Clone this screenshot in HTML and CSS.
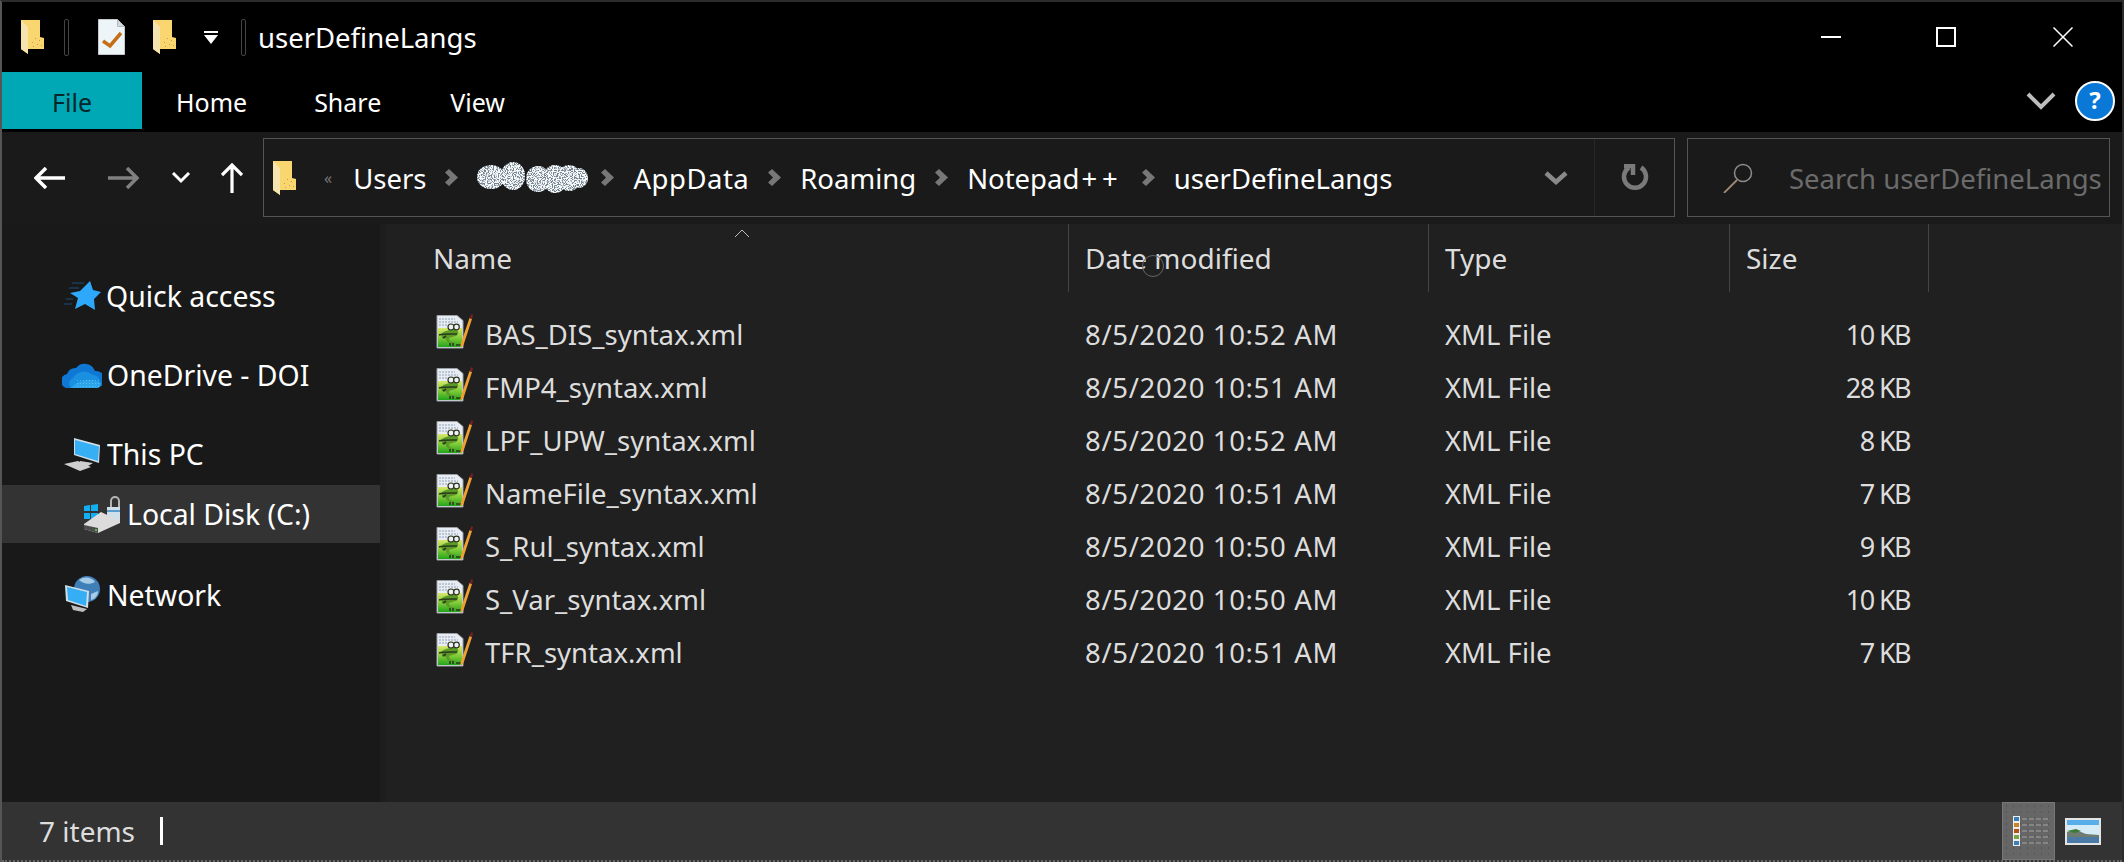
FILE: index.html
```html
<!DOCTYPE html>
<html lang="en">
<head>
    <meta charset="UTF-8">
    <title>userDefineLangs</title>
    <link rel="stylesheet" href="styles.css">
</head>
<body>
<svg class="defs" width="0" height="0">
    <defs>
        <linearGradient id="greenfill" x1="0" y1="0" x2="0" y2="1">
            <stop offset="0" stop-color="#d8e86c"/>
            <stop offset=".5" stop-color="#86cc3a"/>
            <stop offset="1" stop-color="#22a51c"/>
        </linearGradient>
        <filter id="scribble" x="0" y="0" width="100%" height="100%">
            <feTurbulence type="fractalNoise" baseFrequency="0.85" numOctaves="2" seed="7"/>
            <feColorMatrix values="0 0 0 0 0.92  0 0 0 0 0.96  0 0 0 0 0.99  6 6 0 0 -5.2"/>
            <feComposite in2="SourceAlpha" operator="in"/>
        </filter>
        <pattern id="dots" width="3" height="3" patternUnits="userSpaceOnUse">
            <rect width="1" height="1" fill="#9ad2f7"/>
        </pattern>
        <symbol id="chev" viewBox="0 0 13 17">
            <path d="M4 0l9 8.500-9 8.500-4-3.500 5-5-5-5z" fill="#777"/>
        </symbol>
        <symbol id="folder" viewBox="0 0 23 34">
            <path d="M0 0h19v17l4 1v11H7v5L0 29z" fill="#fad671"/>
            <path d="M0 0l7 7v27L0 29z" fill="#f6e4ae"/>
            <path d="M11 22h1v1h-1zM14 18h1v1h-1zM16 24h1v1h-1zM18 20h1v1h-1zM12 26h1v1h-1zM20 25h1v1h-1z" fill="#d9953a"/>
        </symbol>
        <symbol id="npp" viewBox="0 0 37 36">
            <path d="M1 1.500h20l6 5V34H1z" fill="#e8edf3" stroke="#9aa0a6"/>
            <path d="M3 5h16M3 8h19M3 11h9" stroke="#8fa0b5" stroke-width="1.200" stroke-dasharray="2 1"/>
            <path d="M2 14h24v19H2z" fill="url(#greenfill)"/>
            <path d="M5 20c3-3 7-4 10-4h5c3 1 3 4 0 6-3 1-5 1-7 2 0 3 2 4 4 4l4 2-6-1c-3 0-5-2-5-4l-4-1z" fill="#5c9a28"/>
            <circle cx="15" cy="13" r="3" fill="#eef1f2" stroke="#2c3320" stroke-width="1.200"/>
            <circle cx="20.500" cy="13" r="2.800" fill="#eef1f2" stroke="#2c3320" stroke-width="1.200"/>
            <path d="M3 21c4-1 9-1 13-1h5M7 24l3-2M14 29v3M17 29v3M20 31h5" fill="none" stroke="#2b3a1c" stroke-width="1.600"/>
            <path d="M25 29l-1 5 3.500-3L36 5l-2.500-1z" fill="#f0a030"/>
            <path d="M33.500 4l2.500 1 1-4-1.500-1z" fill="#7a2020"/>
        </symbol>
    </defs>
</svg>

<div class="window">
    <div class="titlebar">
        <svg class="qa-folder" width="23" height="34"><use href="#folder"/></svg>
        <span class="qa-sep"></span>
        <svg class="qa-doc" width="27" height="36" viewBox="0 0 27 36">
            <path d="M.5.500h19l7 7v28H.500z" fill="#eef5f8" stroke="#c4c8cc"/>
            <path d="M19.500.500v7h7z" fill="#d3d9dd" stroke="#b5b9bd"/>
            <path d="M5 22l7 5 11-13" fill="none" stroke="#c46f17" stroke-width="3.500"/>
        </svg>
        <svg class="qa-folder2" width="23" height="34"><use href="#folder"/></svg>
        <svg class="qa-drop" width="14" height="13" viewBox="0 0 14 13">
            <path d="M0 0h14v2H0zM0 4h14l-7 9z" fill="#fff"/>
        </svg>
        <span class="qa-sep second"></span>
        <span class="title">userDefineLangs</span>
        <div class="winbtns">
            <span class="min"></span>
            <span class="max"></span>
            <svg width="20" height="20" viewBox="0 0 20 20"><path d="M.5.500l19 19M19.500.500l-19 19" stroke="#fff" stroke-width="1.500"/></svg>
        </div>
    </div>

    <div class="ribbon">
        <div class="tab file">File</div>
        <div class="tab home">Home</div>
        <div class="tab share">Share</div>
        <div class="tab view">View</div>
        <svg class="collapse" width="30" height="18" viewBox="0 0 30 18">
            <path d="M2 2l13 13L28 2" fill="none" stroke="#bdbdbd" stroke-width="4"/>
        </svg>
        <div class="help">?</div>
    </div>

    <div class="toolbar">
        <div class="nav">
            <svg class="back" width="31" height="22" viewBox="0 0 31 22"><path d="M31 11H3M12 1L2 11l10 10" fill="none" stroke="#fff" stroke-width="3.500"/></svg>
            <svg class="forward" width="31" height="22" viewBox="0 0 31 22"><path d="M0 11h28M19 1l10 10-10 10" fill="none" stroke="#808080" stroke-width="3.500"/></svg>
            <svg class="recent" width="20" height="12" viewBox="0 0 20 12"><path d="M2 1l8 8 8-8" fill="none" stroke="#fff" stroke-width="3"/></svg>
            <svg class="up" width="22" height="30" viewBox="0 0 22 30"><path d="M11 30V3M1 12L11 2l10 10" fill="none" stroke="#fff" stroke-width="3.200"/></svg>
        </div>
        <div class="address">
            <svg class="addr-folder" width="23" height="34"><use href="#folder"/></svg>
            <span class="more">«</span>
            <span class="crumb users">Users</span>
            <svg class="chev" width="13" height="17"><use href="#chev"/></svg>
            <svg class="blot" width="112" height="31" viewBox="0 0 112 31">
                <g fill="#76828c">
                    <ellipse cx="14" cy="15" rx="14" ry="12"/>
                    <ellipse cx="36" cy="14" rx="12" ry="14"/>
                    <ellipse cx="61" cy="17" rx="12" ry="13"/>
                    <ellipse cx="78" cy="17" rx="12" ry="14"/>
                    <ellipse cx="92" cy="16" rx="12" ry="13"/>
                    <ellipse cx="102" cy="16" rx="9" ry="10"/>
                </g>
                <g filter="url(#scribble)">
                    <ellipse cx="14" cy="15" rx="14" ry="12"/>
                    <ellipse cx="36" cy="14" rx="12" ry="14"/>
                    <ellipse cx="61" cy="17" rx="12" ry="13"/>
                    <ellipse cx="78" cy="17" rx="12" ry="14"/>
                    <ellipse cx="92" cy="16" rx="12" ry="13"/>
                    <ellipse cx="102" cy="16" rx="9" ry="10"/>
                </g>
            </svg>
            <svg class="chev" width="13" height="17"><use href="#chev"/></svg>
            <span class="crumb appdata">AppData</span>
            <svg class="chev" width="13" height="17"><use href="#chev"/></svg>
            <span class="crumb">Roaming</span>
            <svg class="chev" width="13" height="17"><use href="#chev"/></svg>
            <span class="crumb notepad">Notepad<span class="plus">++</span></span>
            <svg class="chev" width="13" height="17"><use href="#chev"/></svg>
            <span class="crumb">userDefineLangs</span>
            <svg class="addr-drop" width="24" height="14" viewBox="0 0 24 14"><path d="M2 2l10 9 10-9" fill="none" stroke="#8a8a8a" stroke-width="4.500"/></svg>
            <div class="refresh">
                <svg width="28" height="28" viewBox="0 0 28 28"><path d="M8 3.500a11 11 0 1 0 12 0M3 2h9v9" fill="none" stroke="#7a7a7a" stroke-width="4.500"/></svg>
            </div>
        </div>
        <div class="search">
            <svg width="30" height="30" viewBox="0 0 30 30"><circle cx="20" cy="10" r="8.500" fill="none" stroke="#8c8c8c" stroke-width="1.500"/><path d="M14 17L1 30" stroke="#a08a70" stroke-width="1.800"/></svg>
            <span>Search userDefineLangs</span>
        </div>
    </div>

    <div class="content">
        <aside class="sidebar">
            <div class="navitem quick">
                <svg width="38" height="32" viewBox="0 0 38 32">
                    <path d="M8 3h12M5 8h10M2 19h7M0 24h8" stroke="#1a4f7d" stroke-width="1"/>
                    <path d="M26 1l3 9 8 2-7 7 1 11-10-6-10 5 3-11-8-5 10-2z" fill="#2ea8fa"/>
                </svg>
                <span>Quick access</span>
            </div>
            <div class="navitem drive">
                <svg width="40" height="26" viewBox="0 0 40 26">
                    <path d="M7 26a7 7 0 0 1-2-14 9 9 0 0 1 9-6 11 11 0 0 1 19 3 8 8 0 0 1 2 17z" fill="#0f78d4"/>
                    <path d="M9 26a6 6 0 0 1 2-10 13 13 0 0 1 20-3 7 7 0 0 1 7 8 5 5 0 0 1-3 5z" fill="#1a90e0"/>
                    <path d="M9 26c3-4 10-8 18-8 5 0 9 1 12 3a5 5 0 0 1-4 5z" fill="#2ba6ec"/>
                    <path d="M14 16h24v10H14z" fill="url(#dots)" opacity=".5"/>
                </svg>
                <span>OneDrive - DOI</span>
            </div>
            <div class="navitem pc">
                <svg width="38" height="35" viewBox="0 0 38 35">
                    <path d="M11 1l26 7-1 18-25-8z" fill="#cfdde6"/>
                    <path d="M12 3l24 6.500-1 14.500-23-7z" fill="#36aff5"/>
                    <path d="M17 24l13 2-5 3-8-2zM1 27l14-3 13 6-11 4z" fill="#cfcfcf"/>
                </svg>
                <span>This PC</span>
            </div>
            <div class="navitem selected">
                <svg width="38" height="38" viewBox="0 0 38 38">
                    <path d="M1 11l6-1v6H1zM8 10l7-1v7H8zM1 18h6v6H1zM8 18h7v7H8z" fill="#12b0f2"/>
                    <path d="M28 13V6a4 4 0 0 1 8 0v7" fill="none" stroke="#b5b5b5" stroke-width="2"/>
                    <path d="M24 12h13v15H24z" fill="#cfdfe9"/>
                    <path d="M24 15h13v2H24z" fill="#5a9ccc"/>
                    <path d="M1 29l17-12 19 9v2L15 38 1 34z" fill="#dcdcdc"/>
                    <path d="M1 30l14 3v5L1 34z" fill="#4c4c4c"/>
                    <path d="M12 34h2v2h-2z" fill="#4fc04f"/>
                </svg>
                <span>Local Disk (C:)</span>
            </div>
            <div class="navitem network">
                <svg width="36" height="38" viewBox="0 0 36 38">
                    <circle cx="22" cy="13" r="13" fill="#3f7fb8"/>
                    <path d="M14 4c5-4 13-3 16 2-5 3-12 2-16-2zM26 18l7-3c0 5-3 8-7 9z" fill="#a5cbe6"/>
                    <path d="M0 9l24 6-1 17L1 25z" fill="#d3dfe6"/>
                    <path d="M2 11l20 5-1 14-18-6z" fill="#36aef5"/>
                    <path d="M6 29l16 4-4 3-10-2z" fill="#bdbdbd"/>
                </svg>
                <span>Network</span>
            </div>
        </aside>

        <main class="files">
            <div class="header">
                <div class="col name">Name<svg class="sort" width="16" height="8" viewBox="0 0 16 8"><path d="M1 8l7-7 7 7" fill="none" stroke="#bdbdbd" stroke-width="1"/></svg></div>
                <div class="col date">Date modified<span class="busy"></span></div>
                <div class="col type">Type</div>
                <div class="col size">Size</div>
            </div>
            <div class="rows">
                <div class="row"><div class="name"><svg width="37" height="36"><use href="#npp"/></svg>BAS_DIS_syntax.xml</div><div class="date">8/5/2020 10:52 AM</div><div class="type">XML File</div><div class="size">10 KB</div></div>
                <div class="row"><div class="name"><svg width="37" height="36"><use href="#npp"/></svg>FMP4_syntax.xml</div><div class="date">8/5/2020 10:51 AM</div><div class="type">XML File</div><div class="size">28 KB</div></div>
                <div class="row"><div class="name"><svg width="37" height="36"><use href="#npp"/></svg>LPF_UPW_syntax.xml</div><div class="date">8/5/2020 10:52 AM</div><div class="type">XML File</div><div class="size">8 KB</div></div>
                <div class="row"><div class="name"><svg width="37" height="36"><use href="#npp"/></svg>NameFile_syntax.xml</div><div class="date">8/5/2020 10:51 AM</div><div class="type">XML File</div><div class="size">7 KB</div></div>
                <div class="row"><div class="name"><svg width="37" height="36"><use href="#npp"/></svg>S_Rul_syntax.xml</div><div class="date">8/5/2020 10:50 AM</div><div class="type">XML File</div><div class="size">9 KB</div></div>
                <div class="row"><div class="name"><svg width="37" height="36"><use href="#npp"/></svg>S_Var_syntax.xml</div><div class="date">8/5/2020 10:50 AM</div><div class="type">XML File</div><div class="size">10 KB</div></div>
                <div class="row"><div class="name"><svg width="37" height="36"><use href="#npp"/></svg>TFR_syntax.xml</div><div class="date">8/5/2020 10:51 AM</div><div class="type">XML File</div><div class="size">7 KB</div></div>
            </div>
        </main>
    </div>

    <div class="statusbar">
        <span class="count">7 items</span>
        <span class="caret"></span>
        <div class="views">
            <div class="view-details">
                <div class="mini-icons"><i class="c1"></i><i class="c2"></i><i class="c3"></i><i class="c4"></i><i class="c1"></i></div>
                <div class="mini-lines"><i></i><i></i><i></i><i></i><i></i></div>
            </div>
            <svg class="view-thumbs" width="36" height="27" viewBox="0 0 36 27">
                <path d="M0 0h36v27H0z" fill="#e4e4e4"/>
                <path d="M2 2h32v23H2z" fill="#d5ecf7"/>
                <path d="M2 2h32v5H2z" fill="#58aee8"/>
                <path d="M2 14l9-2 10 4 13 1v8H2z" fill="#6f7d70"/>
                <path d="M2 13l9-2 5 2-6 2z" fill="#3e7a3a"/>
                <path d="M2 19h32v6H2z" fill="#4c7aa6"/>
            </svg>
        </div>
    </div>
</div>
</body>
</html>
```

FILE: styles.css
```css
* {
    box-sizing: border-box;
    margin: 0;
    padding: 0;
}

html, body {
    height: 100%;
    overflow: hidden;
    background: #000;
}

body {
    font-family: "Noto Sans", "Open Sans", Arial, sans-serif;
    font-size: 27.5px;
    color: #fff;
}

.defs {
    position: absolute;
}

svg {
    flex: none;
    display: block;
}

.window {
    height: 100vh;
    display: flex;
    flex-direction: column;
    border-top: 2px solid #2b2b2b;
    border-left: 2px solid #555;
    border-right: 2px solid #2b2b2b;
}

/* title bar */
.titlebar {
    height: 70px;
    background: #000;
    display: flex;
    align-items: center;
    padding-left: 19px;
}

.qa-sep {
    width: 5px;
    height: 37px;
    margin-left: 20px;
    border: 1px solid #444;
    border-radius: 2px;
}

.qa-sep.second {
    margin-left: 23px;
}

.qa-doc {
    margin-left: 29px;
}

.qa-folder2 {
    margin-left: 28px;
}

.qa-drop {
    margin-left: 28px;
}

.title {
    margin-left: 12px;
}

.winbtns {
    margin-left: auto;
    display: flex;
    align-items: center;
    padding-right: 49px;
}

.min {
    width: 20px;
    height: 2px;
    background: #fff;
}

.max {
    width: 20px;
    height: 20px;
    border: 2px solid #fff;
    margin: 0 97px 0 95px;
}

/* ribbon */
.ribbon {
    height: 60px;
    background: #000;
    display: flex;
    align-items: flex-start;
    font-size: 25px;
}

.tab {
    height: 57px;
    display: flex;
    align-items: center;
    padding-top: 3px;
}

.file {
    width: 140px;
    background: #00a8b5;
    color: #06262a;
    justify-content: center;
}

.home {
    margin-left: 34px;
}

.share {
    margin-left: 67px;
}

.view {
    margin-left: 69px;
}

.collapse {
    margin-left: auto;
    margin-top: 20px;
}

.help {
    width: 40px;
    height: 40px;
    margin: 9px 7px 0 19px;
    border: 2px solid #fff;
    border-radius: 50%;
    background: #0a78d7;
    font-size: 24px;
    font-weight: 700;
    line-height: 34px;
    text-align: center;
}

/* nav and address bars */
.toolbar {
    height: 92px;
    background: #1a1a1a;
    display: flex;
    padding-top: 6px;
}

.nav {
    width: 261px;
    height: 79px;
    display: flex;
    align-items: center;
    padding-left: 32px;
}

.forward {
    margin-left: 43px;
}

.recent {
    margin-left: 32px;
}

.up {
    margin-left: 30px;
}

.address {
    width: 1412px;
    height: 79px;
    border: 1.5px solid #555;
    display: flex;
    align-items: center;
    padding-left: 9px;
    white-space: nowrap;
}

.more {
    margin-left: 28px;
    font-size: 16px;
    color: #777;
}

.crumb {
    margin: 0 19px;
    padding-top: 2px;
}

.users {
    margin-left: 21px;
}

.appdata {
    letter-spacing: .5px;
}

.notepad {
    margin-right: 19px;
}

.plus {
    letter-spacing: 5px;
    margin-left: 2px;
}

.blot {
    margin: 0 12px 0 19px;
}

.addr-drop {
    margin-left: auto;
}

.refresh {
    width: 80px;
    height: 100%;
    margin-left: 26px;
    border-left: 1px solid #262626;
    display: flex;
    align-items: center;
    justify-content: center;
}

.search {
    width: 423px;
    height: 79px;
    margin-left: 12px;
    border: 1.5px solid #555;
    display: flex;
    align-items: center;
    padding-left: 35px;
    gap: 36px;
    color: #6b6b6b;
    white-space: nowrap;
    overflow: hidden;
}

.search span {
    padding-top: 2px;
}

/* sidebar */
.content {
    flex: 1;
    display: flex;
    min-height: 0;
    background: #202020;
}

.sidebar {
    width: 384px;
    background: #191919;
    border-right: 6px solid #1d1d1d;
    padding-top: 43px;
    font-size: 28.4px;
}

.navitem {
    height: 58px;
    display: flex;
    align-items: center;
    gap: 6px;
}

.quick {
    padding-left: 62px;
    margin-bottom: 21px;
    gap: 4px;
}

.drive {
    padding-left: 60px;
    margin-bottom: 21px;
    gap: 5px;
}

.pc {
    padding-left: 61px;
    margin-bottom: 2px;
    gap: 6px;
}

.selected {
    background: #333;
    padding-left: 81px;
    margin-bottom: 23px;
    gap: 6px;
}

.network {
    padding-left: 63px;
}

/* file list */
.files {
    flex: 1;
    min-width: 0;
}

.header, .row {
    display: grid;
    grid-template-columns: 683px 360px 301px 199px;
}

.header {
    height: 68px;
    font-size: 28px;
}

.col {
    border-right: 1px solid #444;
    display: flex;
    align-items: center;
    padding-left: 16px;
    color: #ddd;
    position: relative;
}

.col.name {
    padding-left: 47px;
}

.sort {
    position: absolute;
    left: 348px;
    top: 5px;
}

.busy {
    position: absolute;
    left: 73px;
    top: 31px;
    width: 22px;
    height: 22px;
    border: 1.5px solid #666;
    border-radius: 50%;
}

.rows {
    padding-top: 16px;
}

.row {
    height: 53px;
    align-items: center;
    color: #ddd;
    white-space: nowrap;
}

.row .name {
    display: flex;
    align-items: center;
    gap: 12px;
    padding-left: 50px;
}

.row .name svg {
    margin-bottom: 5px;
}

.row .date {
    padding-left: 16px;
    letter-spacing: .65px;
}

.row .type {
    padding-left: 16px;
}

.row .size {
    text-align: right;
    padding-right: 19px;
    font-size: 27px;
    letter-spacing: -1.6px;
}

/* status bar */
.statusbar {
    height: 60px;
    background: #333;
    border-bottom: 2px dotted #666;
    display: flex;
    align-items: center;
    padding-left: 37px;
    color: #ddd;
    flex: none;
    font-size: 28px;
}

.caret {
    width: 3px;
    height: 28px;
    background: #fff;
    margin-left: 25px;
}

.views {
    margin-left: auto;
    display: flex;
    align-items: center;
    padding-right: 21px;
    height: 100%;
}

.view-details {
    width: 53px;
    height: 100%;
    background-color: #666;
    background-image: radial-gradient(#565656 1px, transparent 1px);
    background-size: 7px 6px;
    border: 1px solid #777;
    display: flex;
    align-items: center;
    gap: 2px;
    padding-left: 10px;
}

.mini-icons {
    width: 7px;
    background: #eee;
    display: flex;
    flex-direction: column;
    gap: 2px;
    padding: 1px;
}

.mini-icons i {
    height: 4px;
    display: block;
}

.c1 { background: #3a7fb5; }
.c2 { background: #c9852a; }
.c3 { background: #b4521c; }
.c4 { background: #79a544; }

.mini-lines {
    display: flex;
    flex-direction: column;
    gap: 4px;
}

.mini-lines i {
    display: block;
    width: 27px;
    height: 2px;
    background: repeating-linear-gradient(90deg, #858585 0 5px, transparent 5px 7px);
}

.view-thumbs {
    margin-left: 10px;
}
```
